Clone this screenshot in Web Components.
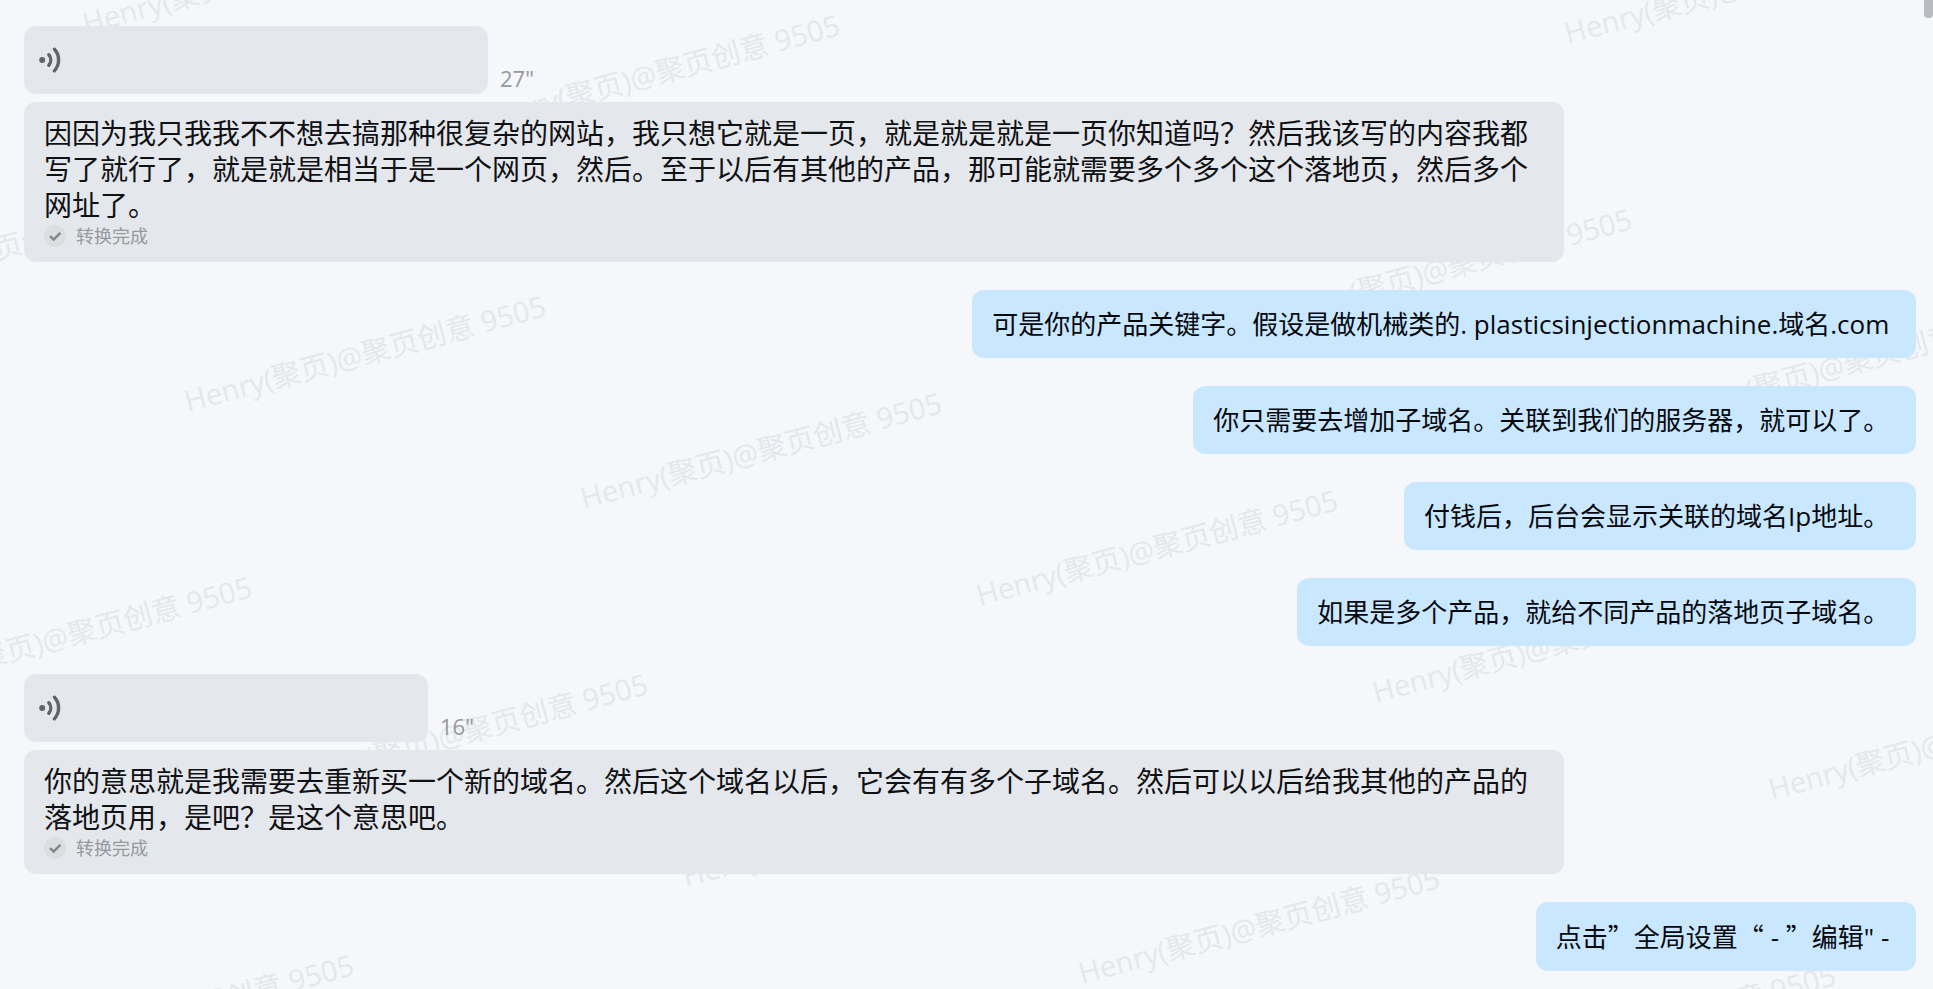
<!DOCTYPE html>
<html lang="zh-CN">
<head>
<meta charset="utf-8">
<meta name="viewport" content="width=device-width, initial-scale=1">
<title>聊天记录</title>
<style>
  body {
    margin: 0;
    background: #f5f7fb;
    color: #101114;
    font-family: "Open Sans", "Noto Sans CJK SC", sans-serif;
  }
  .cjk {
    font-family: "Noto Sans CJK SC", sans-serif;
  }
</style>
</head>
<body>
<chat-window>
  <chat-watermark slot="background" text="Henry(聚页)@聚页创意 9505"></chat-watermark>

  <voice-message seconds="27" style="--voice-width: 464px">因因为我只我我不不想去搞那种很复杂的网站，我只想它就是一页，就是就是就是一页你知道吗？然后我该写的内容我都写了就行了，就是就是相当于是一个网页，然后。至于以后有其他的产品，那可能就需要多个多个这个落地页，然后多个网址了。</voice-message>
  <chat-message>可是你的产品关键字。假设是做机械类的. plasticsinjectionmachine.域名.com&nbsp;</chat-message>
  <chat-message>你只需要去增加子域名。关联到我们的服务器，就可以了。&nbsp;</chat-message>
  <chat-message>付钱后，后台会显示关联的域名Ip地址。&nbsp;</chat-message>
  <chat-message>如果是多个产品，就给不同产品的落地页子域名。&nbsp;</chat-message>
  <voice-message seconds="16" style="--voice-width: 404px">你的意思就是我需要去重新买一个新的域名。然后这个域名以后，它会有有多个子域名。然后可以以后给我其他的产品的落地页用，是吧？是这个意思吧。</voice-message>
  <chat-message>点击<span class="cjk">”</span>全局设置<span class="cjk">“</span> - <span class="cjk">”</span>编辑" -&nbsp;</chat-message>
</chat-window>

<script>
class ChatWindow extends HTMLElement {
  constructor() {
    super();
    this.attachShadow({ mode: 'open' });
    this.shadowRoot.innerHTML = `
      <style>
        :host {
          display: block;
          position: relative;
          min-height: 100vh;
          overflow: hidden;
        }
        .messages {
          position: relative;
          display: flex;
          flex-direction: column;
          gap: 28px;
          padding: 26px 17px 16px 24px;
        }
        .thumb {
          position: absolute;
          top: 0;
          right: 0;
          width: 9px;
          height: 18px;
          border-radius: 0 0 4px 4px;
          background: #b8bcc0;
        }
      </style>
      <slot name="background"></slot>
      <div class="messages"><slot></slot></div>
      <div class="thumb"></div>
    `;
  }
}

class ChatMessage extends HTMLElement {
  constructor() {
    super();
    this.attachShadow({ mode: 'open' });
    this.shadowRoot.innerHTML = `
      <style>
        :host {
          display: block;
          align-self: flex-end;
          box-sizing: border-box;
          max-width: 80%;
          padding: 16px 20px;
          border-radius: 12px;
          background: #c9e7ff;
          color: #05080c;
          font-size: 26px;
          line-height: 36px;
        }
      </style>
      <slot></slot>
    `;
  }
}

class VoiceMessage extends HTMLElement {
  constructor() {
    super();
    this.attachShadow({ mode: 'open' });
  }

  connectedCallback() {
    const seconds = this.getAttribute('seconds') || '0';

    this.shadowRoot.innerHTML = `
      <style>
        :host {
          display: flex;
          flex-direction: column;
          align-items: flex-start;
          gap: 8px;
        }
        .voice {
          display: flex;
          align-items: flex-end;
          gap: 12px;
          max-width: 100%;
        }
        .play {
          display: flex;
          align-items: center;
          width: var(--voice-width, 400px);
          height: 68px;
          padding: 0 12px;
          border: 0;
          border-radius: 12px;
          background: #e4e7eb;
          cursor: pointer;
        }
        .play svg {
          width: 28px;
          height: 28px;
        }
        .time {
          color: #97999d;
          font-size: 22px;
          line-height: 32px;
        }
        .transcript {
          box-sizing: border-box;
          max-width: 1540px;
          padding: 13px 20px;
          border-radius: 12px;
          background: #e4e7eb;
        }
        .text {
          margin: 0;
          font-size: 28px;
          line-height: 36px;
        }
        .status {
          display: flex;
          align-items: center;
          gap: 10px;
          height: 26px;
          color: #97999d;
          font-size: 18px;
          line-height: 26px;
        }
        .status svg {
          width: 22px;
          height: 22px;
        }
      </style>
      <div class="voice">
        <button type="button" class="play" aria-label="play">
          <svg viewBox="0 0 28 28" fill="none" stroke="#606368" stroke-width="3.4" stroke-linecap="round">
            <circle cx="6.2" cy="14" r="3" fill="#606368" stroke="none"></circle>
            <path d="M12.8 8.7 A8.2 8.2 0 0 1 12.8 19.3"></path>
            <path d="M18.4 3.2 A16 16 0 0 1 18.4 24.8"></path>
          </svg>
        </button>
        <span class="time">${seconds}"</span>
      </div>
      <div class="transcript">
        <p class="text"><slot></slot></p>
        <div class="status">
          <svg viewBox="0 0 22 22" fill="none">
            <circle cx="11" cy="11" r="11" fill="#dbdee1"></circle>
            <path d="M6 11.2 L9.6 14.6 L16.4 7.8" stroke="#808388" stroke-width="2.4"></path>
          </svg>
          <span>转换完成</span>
        </div>
      </div>
    `;
  }
}

// Repeats one slanted line of text over the whole window.
class ChatWatermark extends HTMLElement {
  constructor() {
    super();
    this.attachShadow({ mode: 'open' });
  }

  connectedCallback() {
    this._render();
    window.addEventListener('resize', () => this._render());
  }

  _render() {
    const text = this.getAttribute('text') || '';
    const width = window.innerWidth;
    const height = window.innerHeight;
    let marks = '';

    for (let row = -12; row <= 12; row++) {
      for (let col = -12; col <= 12; col++) {
        const x = 188 + col * 396 + row * 102;
        const y = 413 + col * 97 + row * 378;
        if (x < -400 || x > width || y < 0 || y > height + 110) continue;
        marks += `<span style="left: ${x}px; top: ${y}px">${text}</span>`;
      }
    }

    this.shadowRoot.innerHTML = `
      <style>
        :host {
          position: absolute;
          inset: 0;
          overflow: hidden;
          pointer-events: none;
          user-select: none;
        }
        span {
          position: absolute;
          margin-top: -32px;
          color: #e5e7eb;
          font-size: 29px;
          line-height: 40px;
          white-space: nowrap;
          transform: rotate(-15deg);
          transform-origin: 0 32px;
        }
      </style>
      ${marks}
    `;
  }
}

customElements.define('chat-window', ChatWindow);
customElements.define('chat-message', ChatMessage);
customElements.define('voice-message', VoiceMessage);
customElements.define('chat-watermark', ChatWatermark);
</script>
</body>
</html>
